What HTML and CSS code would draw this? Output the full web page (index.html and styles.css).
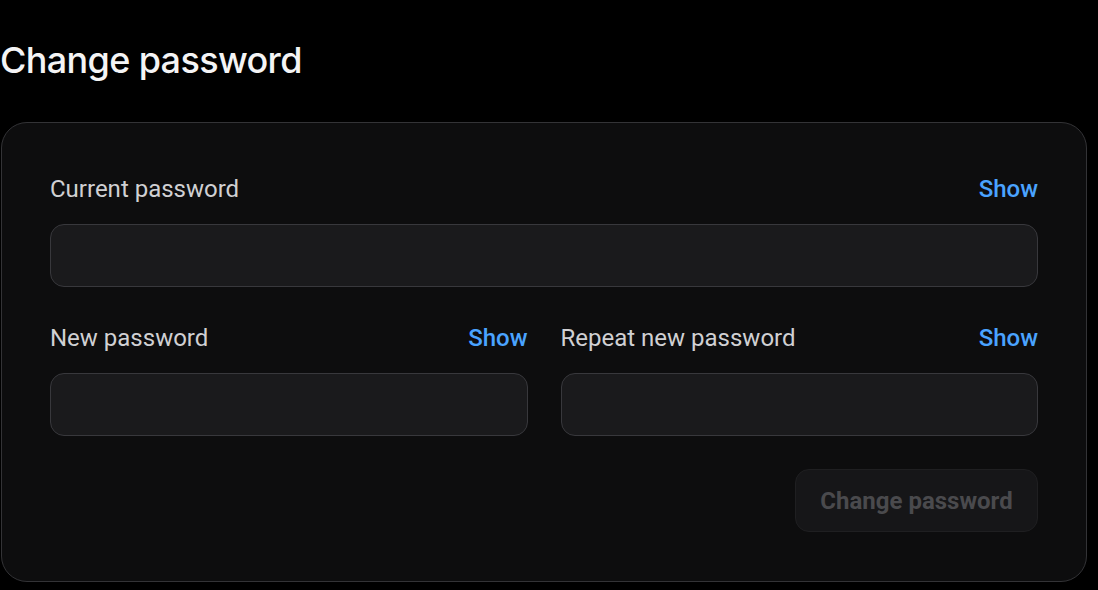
FILE: index.html
```html
<!DOCTYPE html>
<html lang="en">
<head>
<meta charset="utf-8">
<title>Change password</title>
<link rel="stylesheet" href="styles.css">
</head>
<body>
<main class="page">
  <h1 class="title">Change password</h1>
  <form class="card">
    <div class="field">
      <div class="field-head">
        <label class="label" for="cur">Current password</label>
        <button type="button" class="show">Show</button>
      </div>
      <input id="cur" class="input" type="password">
    </div>
    <div class="row">
      <div class="field">
        <div class="field-head">
          <label class="label" for="new">New password</label>
          <button type="button" class="show">Show</button>
        </div>
        <input id="new" class="input" type="password">
      </div>
      <div class="field">
        <div class="field-head">
          <label class="label" for="rep">Repeat new password</label>
          <button type="button" class="show">Show</button>
        </div>
        <input id="rep" class="input" type="password">
      </div>
    </div>
    <div class="actions">
      <button type="submit" class="submit" disabled>Change password</button>
    </div>
  </form>
</main>
</body>
</html>
```

FILE: styles.css
```css
* { box-sizing: border-box; }
html, body { margin: 0; padding: 0; background: #000; }
body { font-family: Roboto, "Liberation Sans", sans-serif; color: #d4d4d6; }

.page { padding: 0 11px 0 1px; }

.title {
  margin: 0;
  padding-top: 38px;
  font-family: Inter, "Liberation Sans", sans-serif;
  font-weight: 500;
  font-size: 36px;
  line-height: 44px;
  letter-spacing: -0.65px;
  color: #f4f4f5;
  margin-left: -1px;
}

.card {
  margin-top: 40px;
  background: #0d0d0e;
  border: 1.5px solid #333336;
  border-radius: 26px;
  padding: 52px 48px 49px 48px;
  display: flex;
  flex-direction: column;
  gap: 37px;
}

.field { display: flex; flex-direction: column; gap: 21px; min-width: 0; }
.field-head { display: flex; justify-content: space-between; align-items: center; height: 28px; }

.label { font-size: 24px; line-height: 28px; color: #d0d0d3; font-weight: 400; }

.show {
  background: none; border: 0; padding: 0;
  font-family: inherit; font-size: 24px; line-height: 28px; font-weight: 500;
  color: #4aa3ff; cursor: pointer;
}

.input {
  height: 63px;
  width: 100%;
  background: #1a1a1c;
  border: 1.5px solid #38383c;
  border-radius: 14px;
  outline: none;
  color: #fff;
}

.row { display: grid; grid-template-columns: 1fr 1fr; gap: 33px; }

.actions { display: flex; justify-content: flex-end; margin-top: -4px; }

.submit {
  height: 63px;
  width: 243px;
  background: #161618;
  border: 1.5px solid #1f1f21;
  border-radius: 14px;
  font-family: inherit;
  font-size: 24px;
  font-weight: 700;
  color: #4a4a4d;
}
```
